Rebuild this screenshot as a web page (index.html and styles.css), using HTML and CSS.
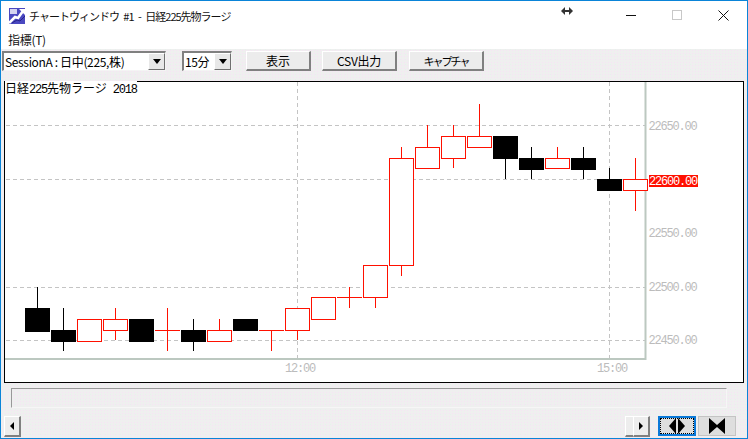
FILE: index.html
```html
<!DOCTYPE html>
<html lang="ja">
<head>
<meta charset="utf-8">
<title>チャートウィンドウ</title>
<link rel="stylesheet" href="styles.css">
</head>
<body>
<div class="window">
  <header class="titlebar">
    <svg class="app-icon" width="16" height="16" viewBox="0 0 16 16">
      <rect width="16" height="16" fill="#4a48c0"/>
      <rect x="1" y="1" width="7" height="5" fill="#d4d4f0"/>
      <path d="M0 15 L6 9 L9 10 L14 3" fill="none" stroke="#fff" stroke-width="2.6"/>
      <path d="M10 1 H16 V7 Z" fill="#fff"/>
      <path d="M3 15 L8 12 L11 13 L16 8" fill="none" stroke="#26248a" stroke-width="1"/>
    </svg>
    <span class="title-text">チャートウィンドウ #1 - 日経225先物ラージ</span>
    <svg class="resize-cursor" width="12" height="8" viewBox="0 0 12 8">
      <path d="M0 4 L4 0 V3 H8 V0 L12 4 L8 8 V5 H4 V8 Z" fill="#333"/>
    </svg>
    <div class="window-controls">
      <span class="ctl"><svg width="10" height="10" viewBox="0 0 10 10"><path d="M0 5.5 H10" stroke="#111" stroke-width="1"/></svg></span>
      <span class="ctl"><svg width="10" height="10" viewBox="0 0 10 10"><rect x=".5" y=".5" width="9" height="9" fill="none" stroke="#c8c8c8"/></svg></span>
      <span class="ctl"><svg width="11" height="11" viewBox="0 0 11 11"><path d="M.5 .5 L10.5 10.5 M10.5 .5 L.5 10.5" stroke="#111" stroke-width="1"/></svg></span>
    </div>
  </header>
  <nav class="menubar"><span>指標(T)</span></nav>
  <div class="toolbar">
    <div class="combo combo-session"><span class="combo-text">SessionA : 日中(225,株)</span><span class="combo-btn"><i class="arrow-down"></i></span></div>
    <div class="combo combo-span"><span class="combo-text">15分</span><span class="combo-btn"><i class="arrow-down"></i></span></div>
    <button class="btn btn-show">表示</button>
    <button class="btn btn-csv">CSV出力</button>
    <button class="btn btn-cap">キャプチャ</button>
  </div>
  <main class="chart">
    <svg id="chart" width="738" height="300" viewBox="5 82 738 300"></svg>
    <span class="chart-title">日経<span class="mono">225</span>先物ラージ<span class="mono"> 2018</span></span>
  </main>
  <div class="groove-row"><div class="groove"></div></div>
  <div class="scroll-row">
    <button class="sbtn sbtn-left"><i class="arrow-left"></i></button>
    <div class="scroll-track"></div>
    <button class="sbtn sbtn-thumb"></button>
    <button class="sbtn sbtn-right"><i class="arrow-right"></i></button>
    <button class="zoom-btn zoom-focus"><span class="zoom-inner"><svg width="16" height="16" viewBox="0 0 16 16"><path d="M7 0 V16 L0 8 Z M9 0 V16 L16 8 Z" fill="#000"/></svg></span></button>
    <button class="zoom-btn"><span class="zoom-inner"><svg width="16" height="16" viewBox="0 0 16 16"><path d="M0 0 L8 7 L16 0 V16 L8 9 L0 16 Z" fill="#000"/></svg></span></button>
  </div>
</div>
<script src="chart.js"></script>
</body>
</html>
```

FILE: styles.css
```css
* { box-sizing: border-box; }
html, body { margin: 0; padding: 0; }
body { width: 748px; height: 439px; overflow: hidden; font-family: "Noto Sans CJK JP", "Liberation Sans", sans-serif; color: #000; }
.window { width: 748px; height: 439px; display: flex; flex-direction: column; border: 1px solid #0a84d8; background-color: #efefef; background-image: radial-gradient(#f6e4f4 .6px, transparent .7px), radial-gradient(#dcdce6 .6px, transparent .7px), radial-gradient(#e6f2ec .6px, transparent .7px); background-size: 3px 3px, 4px 4px, 5px 5px; background-position: 0 0, 1px 2px, 2px 1px; }

.titlebar { height: 30px; flex: none; background: #fff; display: flex; align-items: center; position: relative; padding-left: 8px; }
.app-icon { flex: none; margin-right: 4px; }
.title-text { font-size: 11px; letter-spacing: -1px; word-spacing: 3px; line-height: 16px; white-space: nowrap; color: #111; }
.resize-cursor { position: absolute; left: 560px; top: 6px; }
.window-controls { margin-left: auto; margin-right: 1px; display: flex; height: 100%; }
.ctl { width: 46px; display: flex; align-items: center; justify-content: center; padding-bottom: 2px; }

.menubar { height: 18px; flex: none; background: #fff; font-size: 12px; letter-spacing: -.3px; line-height: 18px; padding-left: 7px; color: #111; }

.toolbar { height: 32px; flex: none; display: flex; align-items: flex-start; padding: 2px 0 0 1px; }
.combo { height: 20px; display: flex; align-items: center; background: #fff; border: 2px solid; border-color: #808080 #f4f4f4 #f4f4f4 #808080; border-width: 2px 1px 1px 2px; }
.combo-session { width: 164px; margin-right: 16px; }
.combo-span { width: 50px; margin-right: 14px; }
.combo-text { flex: 1; font-size: 12px; letter-spacing: -.35px; line-height: 18px; padding: 1px 0 0 1px; white-space: nowrap; overflow: hidden; }
.combo-btn { width: 17px; height: 17px; flex: none; background: #e8e8e8; border: 1px solid; border-color: #fff #707070 #707070 #fff; display: flex; align-items: center; justify-content: center; }
.arrow-down { width: 0; height: 0; border: 4px solid transparent; border-top: 5px solid #000; border-bottom: 0; }

.btn { height: 20px; padding: 0; background: #ececec; border: 1px solid; border-width: 1px 2px 2px 1px; border-color: #fff #808080 #808080 #fff; font-family: inherit; font-size: 12px; line-height: 16px; color: #000; }
.btn-show { width: 65px; margin-right: 11px; }
.btn-csv { width: 75px; margin-right: 12px; letter-spacing: -.3px; }
.btn-cap { width: 75px; font-size: 11px; letter-spacing: -2px; }

.chart { flex: none; width: 740px; height: 302px; margin-left: 3px; background: #fff; border: 1px solid #000; position: relative; }
#chart { display: block; }
.chart-title { position: absolute; left: 0; top: -1px; font-size: 12px; line-height: 13px; white-space: pre; background: #fff; }
.chart-title .mono { font-family: "Liberation Mono", monospace; letter-spacing: -1.2px; }

.groove-row { height: 33px; flex: none; padding: 5px 20px 0 10px; }
.groove { height: 20px; border: 1px solid; border-color: #999 #f6f6f6 #f6f6f6 #999; }

.scroll-row { flex: none; height: 21px; display: flex; align-items: flex-start; padding-left: 3px; }
.sbtn { height: 21px; padding: 0; background: #ededed; border: 1px solid; border-width: 1px 2px 2px 1px; border-color: #fff #808080 #808080 #fff; display: flex; align-items: center; justify-content: center; }
.sbtn-left { width: 17px; }
.scroll-track { width: 604px; }
.sbtn-thumb { width: 8px; border-right-width: 0; }
.sbtn-right { width: 17px; margin-right: 8px; }
.arrow-left { width: 0; height: 0; border: 4px solid transparent; border-right: 4px solid #000; border-left: 0; }
.arrow-right { width: 0; height: 0; border: 4px solid transparent; border-left: 4px solid #000; border-right: 0; }
.zoom-btn { width: 38px; height: 20px; padding: 0; margin-right: 2px; background: #dedede; border: 1px solid #c4c4c4; display: flex; align-items: center; justify-content: center; }
.zoom-focus { border: 2px solid #0a78d8; }
.zoom-inner { display: flex; align-items: center; justify-content: center; width: 100%; height: 100%; }
.zoom-focus .zoom-inner { border: 1px dotted #000; }
.zoom-inner svg { flex: none; }

.chart svg text { font-family: "Liberation Mono", monospace; font-size: 12px; letter-spacing: -1.2px; fill: #bcbcbc; }
.chart svg .price-now { fill: #fff; }
```

FILE: chart.js
```js
// [x centre, body top y, body bottom y, wick top, wick bottom, colour: k=black r=red]
var candles = [
  [37,308,331,287,308,'k'],[63,330,341,308,351,'k'],[89,319,341,319,341,'r'],[115,319,330,308,340,'r'],
  [141,319,341,319,341,'k'],[167,330,330,308,351,'r'],[193,330,341,319,351,'k'],[219,330,341,319,341,'r'],
  [245,319,330,319,330,'k'],[271,330,330,330,351,'r'],[297,308,330,308,340,'r'],[323,297,319,297,319,'r'],
  [349,297,297,287,308,'r'],[375,265,297,265,308,'r'],[401,158,265,147,276,'r'],[427,147,168,125,168,'r'],
  [453,136,158,125,168,'r'],[479,136,147,104,147,'r'],[505,136,158,136,179,'k'],[531,158,169,147,179,'k'],
  [557,158,168,147,168,'r'],[583,158,169,147,179,'k'],[609,179,190,168,190,'k'],[635,179,190,158,211,'r']
];
var s = '';
[125,179,287,340].forEach(function (y) {
  s += '<line x1="6" x2="645" y1="' + (y + .5) + '" y2="' + (y + .5) + '" stroke="#c4c4c4" stroke-dasharray="4 3"/>';
});
[297,609].forEach(function (x) {
  s += '<line x1="' + (x + .5) + '" x2="' + (x + .5) + '" y1="82" y2="358" stroke="#c4c4c4" stroke-dasharray="4 3"/>';
});
s += '<path d="M645.5 82 V359 H5" fill="none" stroke="#bcc8c0" stroke-width="2"/>';
candles.forEach(function (c) {
  var x = c[0], col = c[5] === 'k' ? '#000' : '#ff1000';
  s += '<line x1="' + (x + .5) + '" x2="' + (x + .5) + '" y1="' + c[3] + '" y2="' + c[4] + '" stroke="' + col + '"/>';
  if (c[5] === 'k') {
    s += '<rect x="' + (x - 12) + '" y="' + c[1] + '" width="25" height="' + (c[2] - c[1] + 1) + '" fill="#000"/>';
  } else if (c[1] === c[2]) {
    s += '<line x1="' + (x - 12) + '" x2="' + (x + 13) + '" y1="' + (c[1] + .5) + '" y2="' + (c[1] + .5) + '" stroke="' + col + '"/>';
  } else {
    s += '<rect x="' + (x - 11.5) + '" y="' + (c[1] + .5) + '" width="24" height="' + (c[2] - c[1]) + '" fill="#fff" stroke="' + col + '"/>';
  }
});
[['22650.00',130],['22550.00',237],['22500.00',291],['22450.00',344]].forEach(function (l) {
  s += '<text x="648.5" y="' + l[1] + '">' + l[0] + '</text>';
});
s += '<rect x="649" y="175" width="49" height="12" fill="#ff1000"/>';
s += '<text class="price-now" x="649" y="185">22600.00</text>';
s += '<text x="285" y="372">12:00</text><text x="597" y="372">15:00</text>';
document.getElementById('chart').innerHTML = s;
```
